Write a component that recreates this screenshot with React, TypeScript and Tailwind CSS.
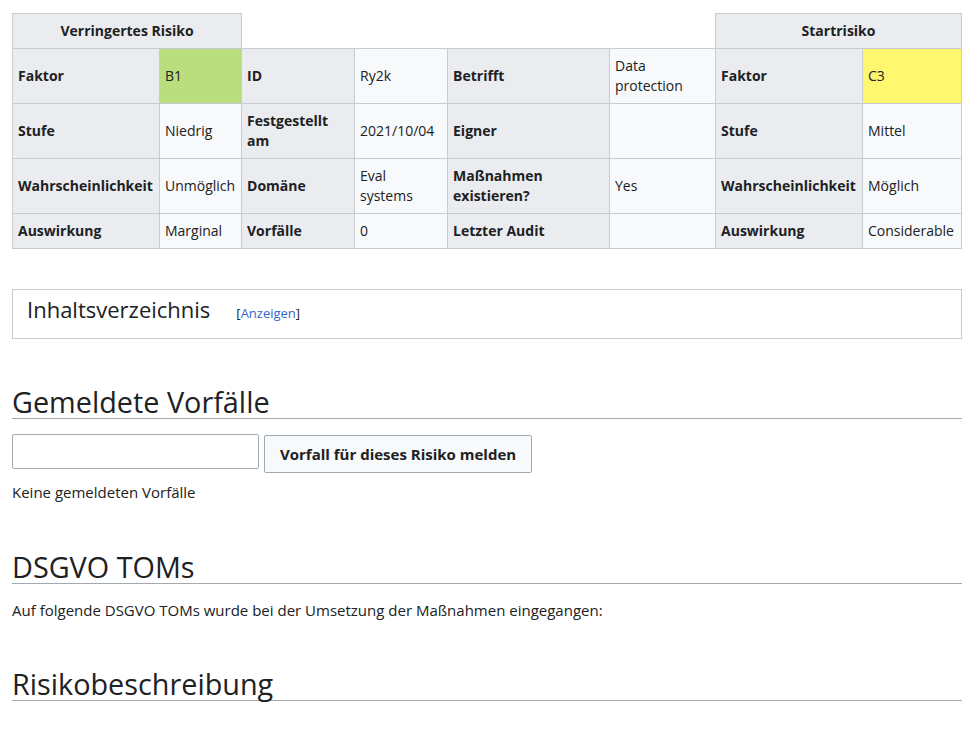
import React from 'react';

type Cell = { label: string; value: string; bg?: string };

const rows: Cell[][] = [
  [
    { label: 'Faktor', value: 'B1', bg: 'bg-[#bade7e]' },
    { label: 'ID', value: 'Ry2k' },
    { label: 'Betrifft', value: 'Data protection' },
    { label: 'Faktor', value: 'C3', bg: 'bg-[#fff770]' },
  ],
  [
    { label: 'Stufe', value: 'Niedrig' },
    { label: 'Festgestellt am', value: '2021/10/04' },
    { label: 'Eigner', value: '' },
    { label: 'Stufe', value: 'Mittel' },
  ],
  [
    { label: 'Wahrscheinlichkeit', value: 'Unmöglich' },
    { label: 'Domäne', value: 'Eval systems' },
    { label: 'Maßnahmen existieren?', value: 'Yes' },
    { label: 'Wahrscheinlichkeit', value: 'Möglich' },
  ],
  [
    { label: 'Auswirkung', value: 'Marginal' },
    { label: 'Vorfälle', value: '0' },
    { label: 'Letzter Audit', value: '' },
    { label: 'Auswirkung', value: 'Considerable' },
  ],
];

const colWidths = [147, 82, 113, 93, 162, 106, 147, 99];

function Heading({ children, className = '' }: { children: React.ReactNode; className?: string }) {
  return (
    <h2
      className={`text-[28.8px] leading-[33px] font-normal text-[#202122] border-b border-[#a2a9b1] ${className}`}
    >
      {children}
    </h2>
  );
}

export default function App() {
  return (
    <div className="font-['Open_Sans',sans-serif] text-[15px] leading-[20px] text-[#202122] bg-white min-h-[735px] pl-3 pt-[13px]">
      <div className="w-[950px]">
        {/* Risk table */}
        <table className="table-fixed w-[950px] border-collapse text-[14px]">
          <colgroup>
            {colWidths.map((w, i) => (
              <col key={i} style={{ width: w }} />
            ))}
          </colgroup>
          <tbody>
            <tr>
              <th
                colSpan={2}
                className="bg-[#eaecf0] border border-[#c8ccd1] py-[7px] px-[5px] text-center font-bold"
              >
                Verringertes Risiko
              </th>
              <td colSpan={4} className="border-0"></td>
              <th
                colSpan={2}
                className="bg-[#eaecf0] border border-[#c8ccd1] py-[7px] px-[5px] text-center font-bold"
              >
                Startrisiko
              </th>
            </tr>
            {rows.map((row, ri) => (
              <tr key={ri}>
                {row.map((c, ci) => (
                  <React.Fragment key={ci}>
                    <th className="bg-[#eaecf0] border border-[#c8ccd1] py-[7px] px-[5px] text-left font-bold align-middle">
                      {c.label}
                    </th>
                    <td
                      className={`${c.bg ?? 'bg-[#f8f9fa]'} border border-[#c8ccd1] py-[7px] px-[5px] align-middle`}
                    >
                      {c.value}
                    </td>
                  </React.Fragment>
                ))}
              </tr>
            ))}
          </tbody>
        </table>

        {/* Table of contents */}
        <div className="mt-[40px] border border-[#c8ccd1] pl-[14px] pt-[4px] pb-[14px] flex items-baseline">
          <span className="text-[22px] leading-[30px]">Inhaltsverzeichnis</span>
          <span className="ml-[26px] text-[13px]">
            [<span className="text-[#3366cc]">Anzeigen</span>]
          </span>
        </div>

        <Heading className="mt-[46px]">Gemeldete Vorfälle</Heading>
        <div className="mt-[15px] flex items-start gap-[5px]">
          <input
            type="text"
            className="w-[247px] h-[35px] border border-[#a2a9b1] rounded-[2px] px-2 outline-none"
          />
          <button className="mt-[1px] h-[38px] px-[15px] border border-[#a2a9b1] rounded-[2px] bg-[#f8f9fa] font-bold">
            Vorfall für dieses Risiko melden
          </button>
        </div>
        <p className="mt-[9px]">Keine gemeldeten Vorfälle</p>

        <Heading className="mt-[48px]">DSGVO TOMs</Heading>
        <p className="mt-[16px]">Auf folgende DSGVO TOMs wurde bei der Umsetzung der Maßnahmen eingegangen:</p>

        <Heading className="mt-[47px]">Risikobeschreibung</Heading>
      </div>
    </div>
  );
}
